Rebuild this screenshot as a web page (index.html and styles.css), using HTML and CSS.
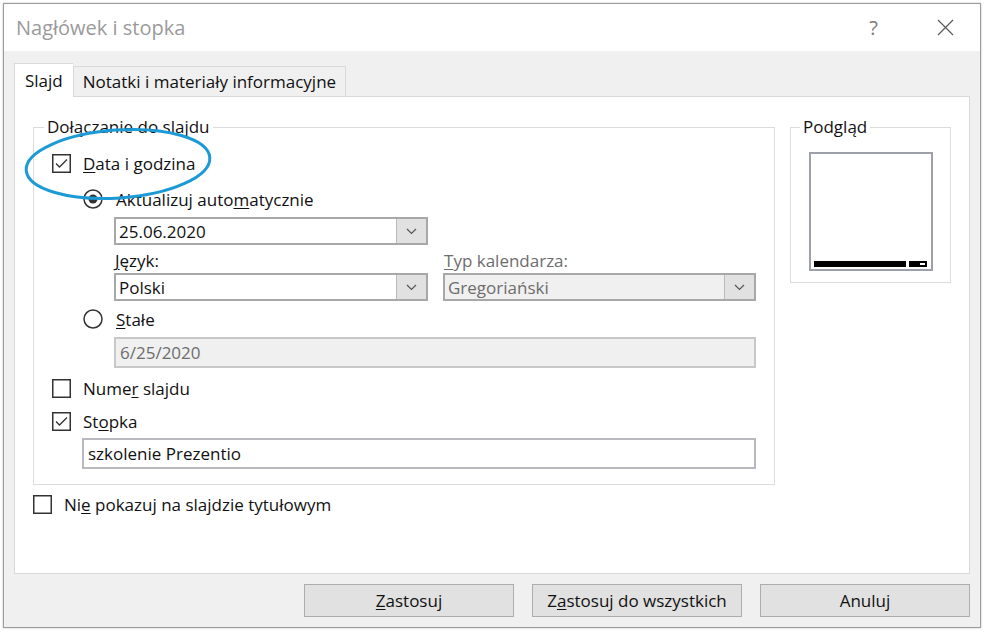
FILE: index.html
```html
<!DOCTYPE html>
<html lang="pl">
<head>
  <meta charset="UTF-8" />
  <title>Nagłówek i stopka</title>
  <link rel="stylesheet" href="styles.css">
</head>
<body>
  <div class="dialog">
    <div class="titlebar">
      <span class="title">Nagłówek i stopka</span>
      <span class="help">?</span>
      <svg class="close" width="17" height="17" viewBox="0 0 17 17"><path d="M1 1L16 16M16 1L1 16" stroke="#5a5a5a" stroke-width="1.2" fill="none"/></svg>
    </div>

    <div class="body">
      <div class="tabs">
        <div class="tab active">Slajd</div>
        <div class="tab">Notatki i materiały informacyjne</div>
      </div>

      <div class="panel">
        <div class="columns">
          <fieldset class="group main">
            <legend>Dołączanie do slajdu</legend>

            <div class="row">
              <svg class="box" width="19" height="19" viewBox="0 0 19 19"><rect x="0.75" y="0.75" width="17.5" height="17.5" fill="#fff" stroke="#333" stroke-width="1.5"/><polyline points="4,9.5 7.5,13 15,5.5" fill="none" stroke="#333" stroke-width="1.3"/></svg>
              <span><u>D</u>ata i godzina</span>
            </div>

            <div class="row radio first">
              <svg width="20" height="20" viewBox="0 0 20 20"><circle cx="10" cy="10" r="9" fill="#fff" stroke="#333" stroke-width="1.5"/><circle cx="10" cy="10" r="4.5" fill="#333"/></svg>
              <span>Aktualizuj auto<u>m</u>atycznie</span>
            </div>

            <div class="combo wide-indent">
              <span class="value">25.06.2020</span>
              <span class="arrow"><svg width="11" height="7" viewBox="0 0 11 7"><polyline points="1,1 5.5,5.5 10,1" fill="none" stroke="#555" stroke-width="1.2"/></svg></span>
            </div>

            <div class="pair">
              <span class="field-label"><u>J</u>ęzyk:</span>
              <span class="field-label muted"><u>T</u>yp kalendarza:</span>
              <div class="combo">
                <span class="value">Polski</span>
                <span class="arrow"><svg width="11" height="7" viewBox="0 0 11 7"><polyline points="1,1 5.5,5.5 10,1" fill="none" stroke="#555" stroke-width="1.2"/></svg></span>
              </div>
              <div class="combo disabled">
                <span class="value">Gregoriański</span>
                <span class="arrow"><svg width="11" height="7" viewBox="0 0 11 7"><polyline points="1,1 5.5,5.5 10,1" fill="none" stroke="#555" stroke-width="1.2"/></svg></span>
              </div>
            </div>

            <div class="row radio second">
              <svg width="20" height="20" viewBox="0 0 20 20"><circle cx="10" cy="10" r="9" fill="#fff" stroke="#333" stroke-width="1.5"/></svg>
              <span><u>S</u>tałe</span>
            </div>

            <div class="textbox disabled fixed-date">6/25/2020</div>

            <div class="row gap7">
              <svg class="box" width="19" height="19" viewBox="0 0 19 19"><rect x="0.75" y="0.75" width="17.5" height="17.5" fill="#fff" stroke="#333" stroke-width="1.5"/></svg>
              <span>Nume<u>r</u> slajdu</span>
            </div>

            <div class="row gap7">
              <svg class="box" width="19" height="19" viewBox="0 0 19 19"><rect x="0.75" y="0.75" width="17.5" height="17.5" fill="#fff" stroke="#333" stroke-width="1.5"/><polyline points="4,9.5 7.5,13 15,5.5" fill="none" stroke="#333" stroke-width="1.3"/></svg>
              <span>St<u>o</u>pka</span>
            </div>

            <div class="textbox footer-text">szkolenie Prezentio</div>
          </fieldset>

          <fieldset class="group preview">
            <legend>Podgląd</legend>
            <div class="slide">
              <span class="bar"></span>
              <span class="bar small"><span class="dash"></span></span>
            </div>
          </fieldset>
        </div>

        <div class="row outer">
          <svg class="box" width="19" height="19" viewBox="0 0 19 19"><rect x="0.75" y="0.75" width="17.5" height="17.5" fill="#fff" stroke="#333" stroke-width="1.5"/></svg>
          <span>Ni<u>e</u> pokazuj na slajdzie tytułowym</span>
        </div>
      </div>

      <div class="buttons">
        <button class="btn"><u>Z</u>astosuj</button>
        <button class="btn">Z<u>a</u>stosuj do wszystkich</button>
        <button class="btn">Anuluj</button>
      </div>
    </div>

    <!-- highlight drawn over the dialog -->
    <svg class="highlight" width="200" height="84" viewBox="0 0 200 84">
      <ellipse cx="98" cy="40" rx="92" ry="34" transform="rotate(-4 98 40)" fill="none" stroke="#1c9ad6" stroke-width="3"/>
    </svg>
  </div>
</body>
</html>
```

FILE: styles.css
```css
* { box-sizing: border-box; }
body { margin: 0; background: #fff; font-family: "Open Sans", "Noto Sans", sans-serif; font-size: 17px; color: #111; }
u { text-decoration-thickness: 1px; text-underline-offset: 2px; }

.dialog {
  position: relative;
  margin: 3px;
  width: 978px;
  height: 625px;
  border: 1px solid #9b9b9b;
  box-shadow: 0 0 2px rgba(0, 0, 0, 0.25);
  background: #f0f0f0;
  display: flex;
  flex-direction: column;
}

.titlebar { flex: none; height: 47px; background: #fff; display: flex; align-items: center; padding: 0 26px 0 12px; }
.title { flex: 1; font-size: 20px; color: #9a9a9a; }
.help { font-size: 20px; color: #7a7a7a; margin-right: 59px; }

.body { flex: 1; display: flex; flex-direction: column; padding: 12px 10px 10px; }

.tabs { display: flex; align-items: flex-end; height: 33px; position: relative; z-index: 1; }
.tab { height: 30px; padding: 0 9px; border: 1px solid #d9d9d9; border-bottom: none; background: #f0f0f0; display: flex; align-items: center; }
.tab.active { height: 34px; margin-bottom: -1px; padding: 0 10px; background: #fff; border-right: none; }

.panel { height: 478px; background: #fff; border: 1px solid #d9d9d9; padding: 19px 17px 0 18px; }
.columns { display: flex; gap: 15px; align-items: flex-start; }

.group { margin: 0; border: 1px solid #dcdcdc; min-width: 0; }
.group legend { padding: 0 3px; line-height: 22px; }
.main { width: 742px; padding: 12px 18px 15px; }
.main legend { margin-left: -8px; }
.preview { width: 161px; padding: 14px 17px 11px 18px; }
.preview legend { margin-left: -9px; }

.row { display: flex; align-items: center; height: 26px; gap: 12px; }
.radio { margin-left: 31px; gap: 13px; }
.radio.first { margin-top: 10px; }
.radio.second { margin-top: 5px; }
.gap7 { margin-top: 7px; }
.outer { margin-top: 6px; }

.combo { display: flex; height: 28px; border: 2px solid #a8a8a8; background: #fff; }
.combo .value { flex: 1; display: flex; align-items: center; padding-left: 3px; }
.combo .arrow { width: 30px; background: #e1e1e1; border-left: 1px solid #b9b9b9; display: flex; align-items: center; justify-content: center; }
.combo.disabled .value { background: #f0f0f0; color: #6d6d6d; }
.wide-indent { margin: 5px 0 0 62px; width: 314px; }

.pair { display: grid; grid-template-columns: 314px 313px; column-gap: 15px; margin: 5px 0 0 62px; }
.field-label { height: 22px; line-height: 22px; padding-left: 1px; margin-bottom: 1px; }
.muted { color: #6d6d6d; }

.textbox { height: 31px; border: 2px solid #b8b8c0; background: #fff; padding-left: 4px; display: flex; align-items: center; }
.textbox.disabled { background: #f0f0f0; border-color: #c8c8c8; color: #6d6d6d; }
.fixed-date { margin: 5px 0 0 62px; }
.footer-text { margin: 4px 0 0 30px; }

.slide { width: 124px; height: 119px; border: 2px solid #9da0aa; background: #fff; display: flex; align-items: flex-end; gap: 3px; padding: 0 4px 2px 3px; }
.bar { width: 92px; height: 6px; background: #000; }
.bar.small { width: 18px; display: flex; align-items: center; justify-content: flex-end; padding-right: 2px; }
.dash { width: 5px; height: 2px; background: #fff; }

.buttons { display: flex; justify-content: flex-end; gap: 18px; margin-top: 10px; }
.btn { width: 210px; height: 33px; background: #e1e1e1; border: 1px solid #adadad; font: inherit; color: #111; }

.highlight { position: absolute; left: 16px; top: 120px; pointer-events: none; }
```
